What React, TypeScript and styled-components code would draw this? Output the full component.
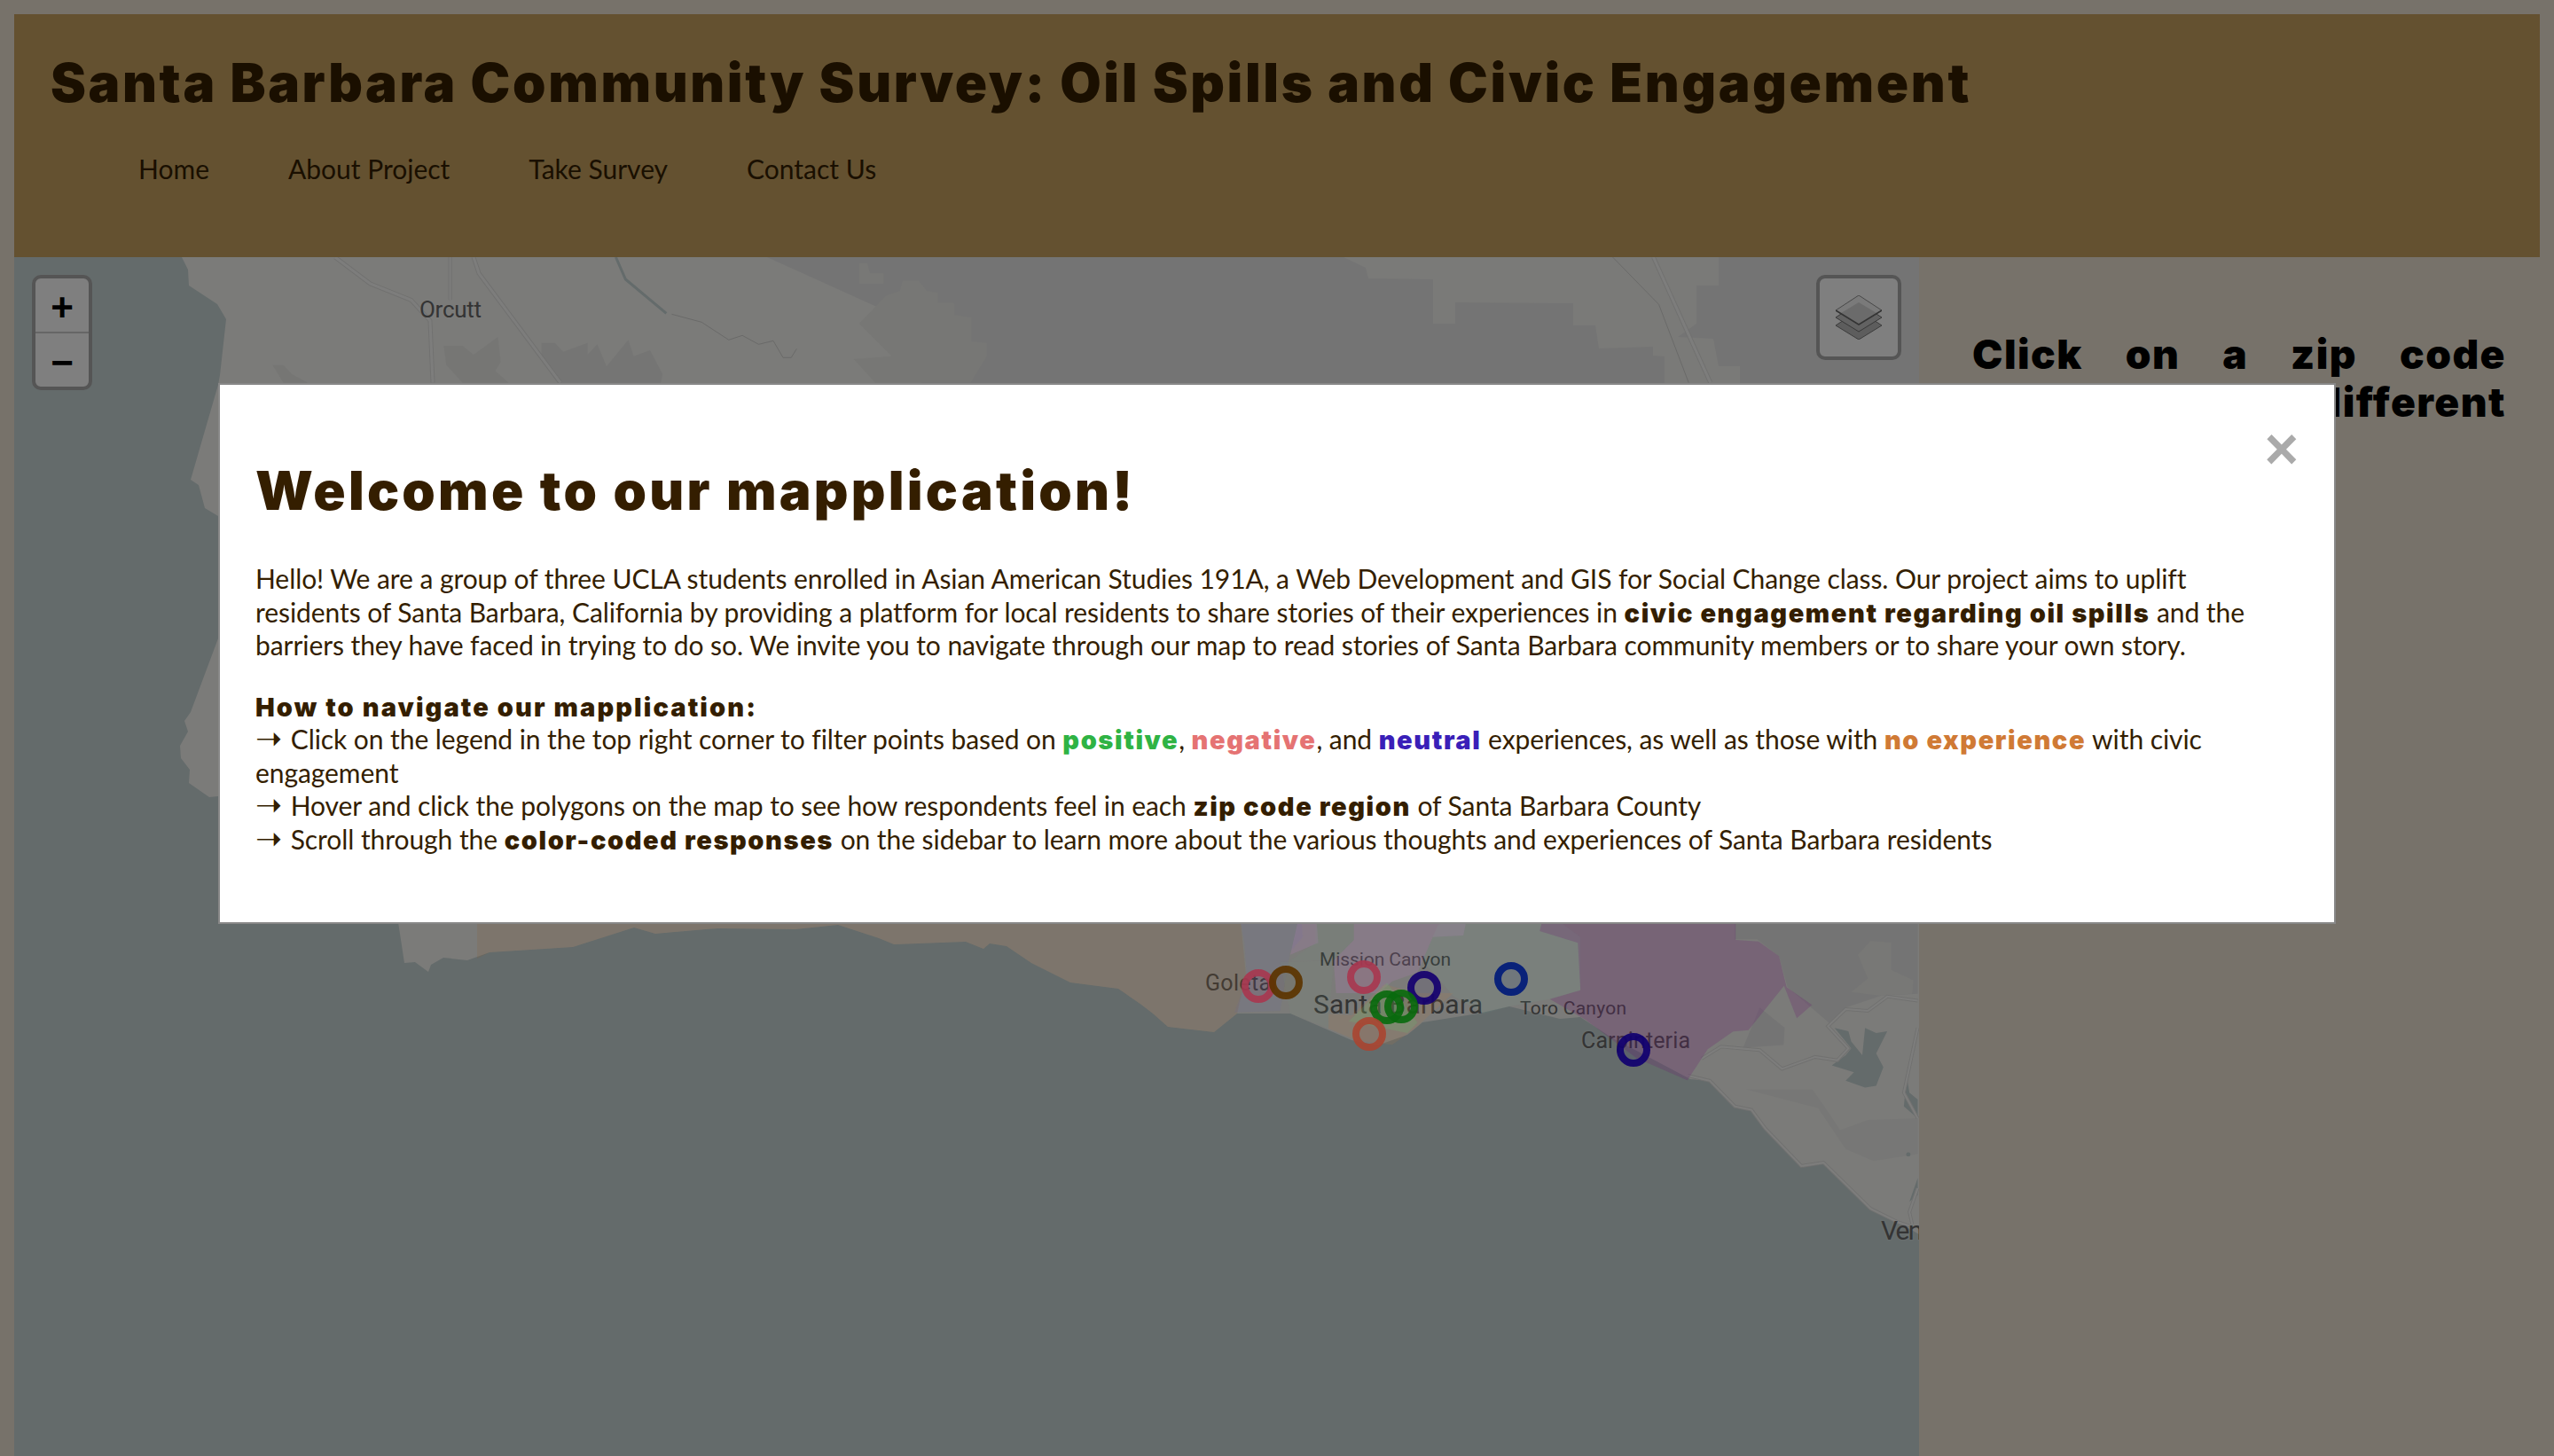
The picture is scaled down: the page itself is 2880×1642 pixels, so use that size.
import React from "react";
import styled, { createGlobalStyle } from "styled-components";

const heavyFont = `"Inter", "Lato", "Liberation Sans", sans-serif`;

const GlobalStyle = createGlobalStyle`
  html, body {
    margin: 0;
    height: 100%;
  }
  body {
    padding: 16px 16px 0;
    box-sizing: border-box;
    height: 1642px;
    overflow: hidden;
    background: #eee4d4;
    font-family: "Lato", "Liberation Sans", sans-serif;
    color: #341e00;
  }
`;

const Page = styled.div`
  display: flex;
  flex-direction: column;
`;

const Header = styled.header`
  height: 274px;
  box-sizing: border-box;
  padding: 41px 0 0 41px;
  background: #c8a260;
`;

const Title = styled.h1`
  margin: 0;
  font-family: ${heavyFont};
  font-size: 60px;
  line-height: 72px;
  font-weight: 900;
  letter-spacing: 2.62px;
  color: #341e00;
`;

const Nav = styled.ul`
  display: flex;
  gap: 89px;
  list-style: none;
  margin: 41px 0 0;
  padding: 0 0 0 99px;
`;

const NavItem = styled.li`
  font-size: 30px;
  line-height: 40px;
  letter-spacing: 0;
`;

const Main = styled.main`
  display: grid;
  grid-template-columns: 2148px 1fr;
  height: 1352px;
`;

const MapPanel = styled.section`
  position: relative;
  overflow: hidden;
  background: #c8d6d6;
`;

const MapDrawing = styled.svg`
  display: block;
  width: 2148px;
  height: 1352px;
`;

const ZipLayer = styled.svg`
  position: absolute;
  top: 0;
  left: 0;
  width: 2148px;
  height: 1352px;
  z-index: 20;
  pointer-events: none;
`;

const ZoomControl = styled.div`
  position: absolute;
  top: 20px;
  left: 20px;
  width: 60px;
  z-index: 5;
  border: 4px solid #aaa;
  border-radius: 10px;
  background: #fff;
  overflow: hidden;
`;

const ZoomButton = styled.div<{ $last?: boolean }>`
  height: ${({ $last }) => ($last ? "60px" : "62px")};
  box-sizing: border-box;
  padding-top: 6px;
  display: flex;
  align-items: center;
  justify-content: center;
  font-family: "Liberation Sans", sans-serif;
  font-weight: 700;
  font-size: 44px;
  line-height: 54px;
  color: #000;
  border-bottom: ${({ $last }) => ($last ? "none" : "2px solid #ccc")};
`;

const LayersControl = styled.div`
  position: absolute;
  top: 20px;
  right: 20px;
  width: 88px;
  height: 88px;
  z-index: 5;
  border: 4px solid #aaa;
  border-radius: 10px;
  background: #fff;
  display: flex;
  align-items: center;
  justify-content: center;
`;

const Sidebar = styled.aside`
  padding: 82px 38px 0 60px;
`;

const SidebarText = styled.p`
  margin: 0;
  font-family: ${heavyFont};
  font-size: 46px;
  line-height: 54px;
  font-weight: 900;
  letter-spacing: 1.5px;
  text-align: justify;
  text-align-last: justify;
  color: #000;
`;

const Backdrop = styled.div`
  position: fixed;
  inset: 0;
  z-index: 10;
  background: rgba(0, 0, 0, 0.5);
`;

const ModalLayer = styled.div`
  position: fixed;
  inset: 0;
  z-index: 30;
  display: flex;
  justify-content: center;
  align-items: flex-start;
  padding-top: 432px;
`;

const Modal = styled.div`
  position: relative;
  width: 2384px;
  height: 606px;
  box-sizing: content-box;
  border: 2px solid #888;
  background: #fff;
  color: #341e00;
`;

const CloseButton = styled.span`
  position: absolute;
  top: 39px;
  right: 40px;
  font-family: "Liberation Sans", sans-serif;
  font-weight: 700;
  font-size: 66px;
  line-height: 66px;
  color: #aaa;
`;

const ModalBody = styled.div`
  padding: 83px 69px 0 40px;
`;

const ModalTitle = styled.h2`
  margin: 0 0 45px;
  font-family: ${heavyFont};
  font-size: 60px;
  line-height: 72px;
  font-weight: 900;
  letter-spacing: 3.26px;
  color: #341e00;
`;

const Paragraph = styled.p`
  margin: 0 0 31px;
  font-size: 30px;
  line-height: 37.5px;
  letter-spacing: -0.07px;
`;

const Strong = styled.strong`
  font-family: ${heavyFont};
  font-size: 29px;
  line-height: 1;
  font-weight: 900;
  letter-spacing: 1.6px;
`;

const Heading = styled(Strong)`
  letter-spacing: 2.1px;
`;

const Tone = styled(Strong)<{ $color: string }>`
  color: ${({ $color }) => $color};
`;

const Arrow = styled.span`
  font-family: "DejaVu Sans", sans-serif;
  font-size: 36px;
  line-height: 0;
  margin-right: 2px;
`;

const coast =
  "205,290 212,304 213,322 245,343 255,360 248,423 246,434 215,541 224,547 231,573 246,582 " +
  "246,720 215,803 208,813 212,825 203,841 204,855 214,868 213,883 236,899 246,898 " +
  "449,1040 456,1086 468,1085 483,1096 486,1088 500,1080 527,1083 552,1074 646,1068 715,1046 " +
  "739,1053 796,1048 810,1047 897,1048 945,1043 991,1058 1008,1065 1089,1062 1109,1070 1116,1064 " +
  "1135,1067 1163,1086 1207,1108 1261,1115 1287,1133 1300,1143 1317,1158 1369,1164 1395,1143 " +
  "1455,1143 1524,1173 1553,1179 1587,1167 1604,1153 1667,1143 1702,1135 1759,1149 1782,1147 " +
  "1817,1170 1874,1200 1906,1217 1928,1219 1956,1248 1975,1252 1991,1273 2031,1315 2056,1311 " +
  "2109,1363 2140,1378 2164,1392 2164,290";

const westZip =
  "538,1000 538,1081 552,1074 646,1068 715,1046 739,1053 796,1048 810,1047 897,1048 945,1043 " +
  "991,1058 1008,1065 1089,1062 1109,1070 1116,1064 1135,1067 1163,1086 1207,1108 1261,1115 " +
  "1287,1133 1300,1143 1317,1158 1369,1164 1395,1143 1405,1100 1395,1000";

const rings = [
  { cx: 1419, cy: 1112, color: "#a83850" },
  { cx: 1450, cy: 1108, color: "#5c3400" },
  { cx: 1538, cy: 1102, color: "#a83850" },
  { cx: 1606, cy: 1114, color: "#150070" },
  { cx: 1704, cy: 1104, color: "#001a7a" },
  { cx: 1564, cy: 1136, color: "#0a6a0e" },
  { cx: 1580, cy: 1135, color: "#0a6a0e" },
  { cx: 1544, cy: 1166, color: "#a84532" },
  { cx: 1842, cy: 1184, color: "#100070" },
];

const labels = [
  { x: 473, y: 358, size: 26, width: 70, text: "Orcutt" },
  { x: 1359, y: 1117, size: 25, width: 74, text: "Goleta" },
  { x: 1488, y: 1089, size: 21, width: 148, text: "Mission Canyon" },
  { x: 1481, y: 1143, size: 30, width: 191, text: "Santa Barbara" },
  { x: 1714, y: 1144, size: 21, width: 120, text: "Toro Canyon" },
  { x: 1783, y: 1182, size: 25, width: 123, text: "Carpinteria" },
  { x: 2121, y: 1398, size: 30, width: 92, text: "Ventura" },
];

function Road({ points, width = 2 }: { points: string; width?: number }) {
  return (
    <>
      <polyline points={points} fill="none" stroke="#e2e2e0" strokeWidth={width + 2} vectorEffect="non-scaling-stroke" />
      <polyline points={points} fill="none" stroke="#fbfbf9" strokeWidth={width} vectorEffect="non-scaling-stroke" />
    </>
  );
}

function BaseMap() {
  return (
    <MapDrawing viewBox="16 290 2148 1352">
      <polygon points={coast} fill="#f6f6f2" />

      {/* darker hills along the top strip, with the lighter valleys cut back in */}
      <polygon points="865,290 1002,352 1040,434 2164,434 2164,290" fill="#e8e8e8" />
      <polygon
        points="1515,290 1540,302 1543,314 1616,315 1616,365 1641,365 1641,341 1774,342 1774,367 1799,367 1803,393 1864,391 1864,401 1877,402 1877,434 1962,434 1962,413 1938,413 1932,382 1892,380 1913,365 1913,322 1938,322 1938,290"
        fill="#f4f4f0"
      />
      <g transform="translate(240 285) scale(0.6124 0.3333)">
        <polygon points="1190,35 1205,35 1210,70 1235,70 1235,105 1190,105" fill="#f0f0ec" />
        <polygon
          points="1240,145 1265,130 1270,95 1300,95 1315,130 1335,135 1335,170 1365,170 1365,210 1397,220 1397,300 1425,305 1425,350 1395,440 1220,440 1180,360 1250,350 1190,240"
          fill="#eeeeea"
        />
        <polygon points="425,315 460,315 480,345 525,285 530,370 520,400 545,440 460,440 430,380" fill="#ecece9" />
        <polygon
          points="605,305 630,305 645,335 690,305 690,345 708,310 725,385 765,295 775,350 805,330 828,410 825,440 640,440 605,350"
          fill="#eaeae8"
        />
        <polygon points="110,380 130,380 145,410 175,440 130,440" fill="#ecece9" />
        <Road points="225,15 290,105 365,160 400,230 405,440" width={3} />
        <Road points="480,15 490,70 640,440" width={3} />
        <Road points="437,15 437,160" />
        <polyline points="742,15 760,90 835,205" fill="none" stroke="#c8d6d6" strokeWidth={3} vectorEffect="non-scaling-stroke" />
        <polyline
          points="845,208 900,235 950,295 975,280 1005,310 1032,298 1050,355 1065,355 1075,325"
          fill="none"
          stroke="#d4d4d2"
          strokeWidth={1}
          vectorEffect="non-scaling-stroke"
        />
      </g>
      <g transform="translate(1200 285) scale(0.6124 0.3333)">
        <Road points="1085,15 1190,440" width={3} />
        <polyline points="1010,15 1095,175 1150,440" fill="none" stroke="#d4d4d2" strokeWidth={1} vectorEffect="non-scaling-stroke" />
      </g>

      {/* east of Carpinteria: hills, lake, roads */}
      <g transform="translate(1900 1040) scale(0.625 0.3846)">
        <polygon points="90,5 420,5 420,210 355,215 290,250 260,295 185,190 170,100 130,50 90,50" fill="#e8e8e8" />
        <polygon points="335,55 372,60 372,140 412,170 410,210 350,215 300,205 330,165 312,95" fill="#f0f0ec" />
        <polygon points="135,250 180,310 178,360 105,368" fill="#e8e8e8" />
        <polygon points="110,490 230,490 260,560 280,610 330,580 420,575 420,680 340,700 290,665 240,545" fill="#eeeeec" />
        <polygon
          points="270,310 295,320 300,350 320,390 325,310 345,325 365,320 345,385 358,425 345,480 325,485 290,465 305,440 265,420 290,390 300,370"
          fill="#c8d6d6"
        />
        <polygon points="400,450 395,540 420,575 420,520 405,500" fill="#c8d6d6" />
        <polygon points="420,750 405,820 420,800" fill="#c8d6d6" />
        <ellipse cx="403" cy="681" rx="4" ry="6" fill="#c8d6d6" />
        <Road points="30,400 65,365 135,375 175,430 235,395 275,405 295,370 258,305 290,255 330,260 365,218 420,230" />
        <Road points="5,450 45,465 90,540 120,550 145,605 210,715 250,705 335,840 385,880 405,890" />
        <Road points="420,310 395,500 420,575" />
        <Road points="420,780 405,850 410,885" />
      </g>

      {labels.map((label) => (
        <text
          key={label.text}
          x={label.x}
          y={label.y}
          fontFamily="Roboto, sans-serif"
          fontSize={label.size}
          textLength={label.width}
          fill="#686868"
          stroke="#ffffff"
          strokeOpacity={0.15}
          strokeWidth={3}
          paintOrder="stroke"
        >
          {label.text}
        </text>
      ))}
    </MapDrawing>
  );
}

function ZipOverlay() {
  return (
    <ZipLayer viewBox="16 290 2148 1352">
      <polygon points={westZip} fill="#8a6030" fillOpacity={0.18} />
      <g transform="translate(1300 1020) scale(0.574 0.3333)">
        <polygon points="168,20 290,20 295,110 270,160 250,360 160,365 185,250 180,130" fill="#6060b0" fillOpacity={0.12} />
        <polygon points="155,20 168,20 175,70" fill="#c080c8" fillOpacity={0.18} />
        <polygon points="290,20 320,20 325,130 270,170" fill="#c080c8" fillOpacity={0.18} />
        <polygon points="320,20 395,20 395,120 355,190 270,190 320,130" fill="#70a080" fillOpacity={0.1} />
        <polygon points="395,20 620,20 610,105 550,110 520,230 470,260 445,300 360,300 355,190 395,120" fill="#c080c8" fillOpacity={0.18} />
        <polygon points="250,195 355,190 345,420 270,370" fill="#70a080" fillOpacity={0.08} />
        <polygon points="345,370 390,375 455,270 520,300 590,300 515,420 470,475 400,460 345,420" fill="#c88040" fillOpacity={0.14} />
        <polygon points="385,395 460,265 520,400 500,435" fill="#60c070" fillOpacity={0.2} />
        <polygon points="560,70 620,20 770,20 840,110 840,290 780,320 700,345 650,370 590,310 530,190" fill="#70c0b0" fillOpacity={0.07} />
        <polygon
          points="770,20 1145,20 1145,120 1190,125 1230,175 1245,280 1295,340 1265,385 1240,275 1170,425 1140,430 1090,490 1050,595 950,520 850,390 780,320 840,290 835,130 760,90"
          fill="#6a2070"
          fillOpacity={0.25}
        />
      </g>
      {rings.map((ring) => (
        <circle
          key={`${ring.cx}-${ring.cy}`}
          cx={ring.cx}
          cy={ring.cy}
          r={15}
          fill={ring.color}
          fillOpacity={0.08}
          stroke={ring.color}
          strokeOpacity={0.92}
          strokeWidth={8}
        />
      ))}
    </ZipLayer>
  );
}

function LayersIcon() {
  return (
    <svg width="52" height="50" viewBox="0 0 52 50">
      <polygon points="26,17 52,34 26,50 0,34" fill="#bababa" stroke="#787878" strokeWidth="1" />
      <polygon points="26,8 52,25 26,41 0,25" fill="#c4c4c4" stroke="#707070" strokeWidth="1" />
      <polygon points="26,0 52,17 26,33 0,17" fill="#f4f4f4" stroke="#909090" strokeWidth="1" />
      <polygon points="26,8 46,20 26,33 6,20" fill="#d6d6d6" />
      <polyline points="0,17 26,33 52,17" fill="none" stroke="#686868" strokeWidth="1.5" />
    </svg>
  );
}

export default function App() {
  return (
    <>
      <GlobalStyle />
      <Page>
        <Header>
          <Title>Santa Barbara Community Survey: Oil Spills and Civic Engagement</Title>
          <Nav>
            <NavItem>Home</NavItem>
            <NavItem>About Project</NavItem>
            <NavItem>Take Survey</NavItem>
            <NavItem>Contact Us</NavItem>
          </Nav>
        </Header>
        <Main>
          <MapPanel>
            <BaseMap />
            <ZipOverlay />
            <ZoomControl>
              <ZoomButton>+</ZoomButton>
              <ZoomButton $last>−</ZoomButton>
            </ZoomControl>
            <LayersControl>
              <LayersIcon />
            </LayersControl>
          </MapPanel>
          <Sidebar>
            <SidebarText>
              Click on a zip code
              <br />
              to see different
            </SidebarText>
          </Sidebar>
        </Main>
      </Page>
      <Backdrop />
      <ModalLayer>
        <Modal>
          <CloseButton>×</CloseButton>
          <ModalBody>
            <ModalTitle>Welcome to our mapplication!</ModalTitle>
            <Paragraph>
              Hello! We are a group of three UCLA students enrolled in Asian American Studies 191A, a Web Development
              and GIS for Social Change class. Our project aims to uplift residents of Santa Barbara, California by
              providing a platform for local residents to share stories of their experiences in{" "}
              <Strong>civic engagement regarding oil spills</Strong> and the barriers they have faced in trying to do
              so. We invite you to navigate through our map to read stories of Santa Barbara community members or to
              share your own story.
            </Paragraph>
            <Paragraph>
              <Heading>How to navigate our mapplication:</Heading>
              <br />
              <Arrow>➝</Arrow> Click on the legend in the top right corner to filter points based on{" "}
              <Tone $color="#2fb344">positive</Tone>, <Tone $color="#e57373">negative</Tone>, and{" "}
              <Tone $color="#3a1fb8">neutral</Tone> experiences, as well as those with{" "}
              <Tone $color="#d07a35">no experience</Tone> with civic engagement
              <br />
              <Arrow>➝</Arrow> Hover and click the polygons on the map to see how respondents feel in each{" "}
              <Strong>zip code region</Strong> of Santa Barbara County
              <br />
              <Arrow>➝</Arrow> Scroll through the <Strong>color-coded responses</Strong> on the sidebar to learn more
              about the various thoughts and experiences of Santa Barbara residents
            </Paragraph>
          </ModalBody>
        </Modal>
      </ModalLayer>
    </>
  );
}
